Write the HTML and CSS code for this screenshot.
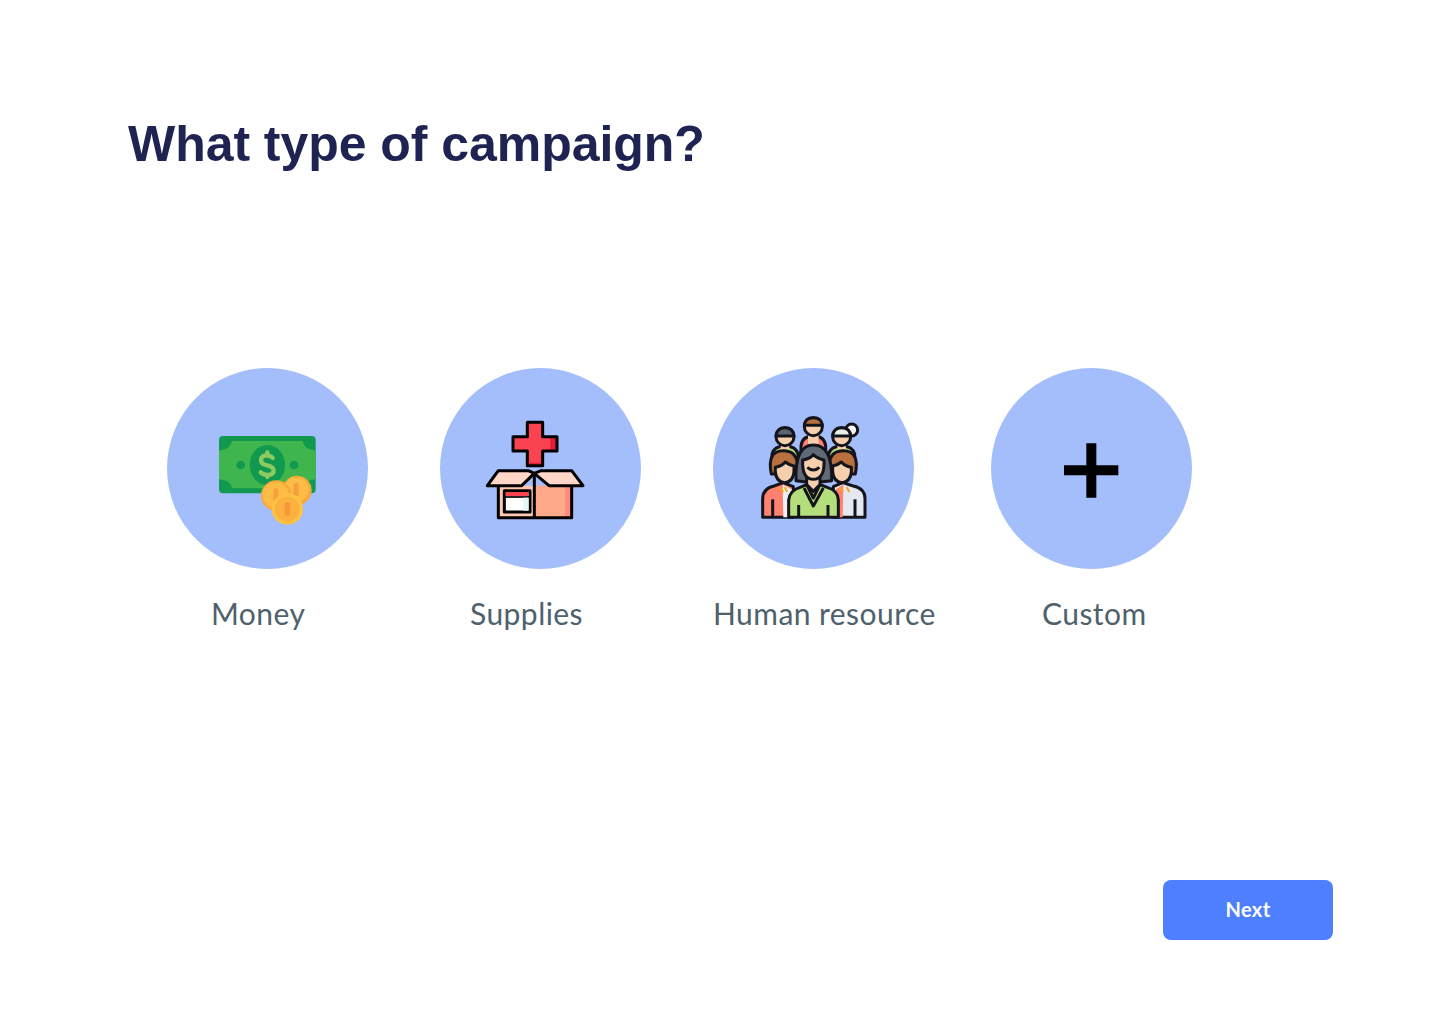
FILE: index.html
```html
<!DOCTYPE html>
<html lang="en">
<head>
    <meta charset="UTF-8">
    <meta name="viewport" content="width=device-width, initial-scale=1.0">
    <title>What type of campaign?</title>
    <link rel="stylesheet" href="styles.css">
</head>
<body>
    <main class="page">
        <h1 class="title">What type of campaign?</h1>
        <div class="options">
            <div class="option option-money">
                <div class="circle">
                    <svg class="icon" viewBox="-99 -156 603 603">
                        <rect x="57" y="48" width="290" height="172" rx="12" fill="#119a4f"/>
                        <path d="M96 63H308Q312 88 347 92V178Q312 180 308 205H96Q92 180 57 178V92Q92 88 96 63Z" fill="#3fb54e"/>
                        <ellipse cx="202" cy="135" rx="53" ry="60" fill="#119a4f"/>
                        <circle cx="122" cy="135" r="13" fill="#119a4f"/>
                        <circle cx="282" cy="135" r="13" fill="#119a4f"/>
                        <path d="M218 114Q212 106 200 106Q183 107 183 120Q183 132 201 136Q221 140 221 152Q220 165 202 165Q190 165 182 157M202 97V106M202 165V171" fill="none" stroke="#8dcb62" stroke-width="13" stroke-linecap="round"/>
                        <circle cx="291" cy="211" r="44" fill="#f7a93a"/>
                        <circle cx="289" cy="209" r="37" fill="#fcbc45"/>
                        <rect x="281" y="189" width="15" height="40" rx="7" fill="#f6a03b"/>
                        <circle cx="229" cy="227" r="46" fill="#f7a93a"/>
                        <circle cx="227" cy="225" r="39" fill="#fcbc45"/>
                        <rect x="220" y="205" width="15" height="40" rx="7" fill="#f6a03b"/>
                        <circle cx="262" cy="267" r="47" fill="#fec243"/>
                        <circle cx="262" cy="267" r="37" fill="#fbb040"/>
                        <rect x="254" y="246" width="16" height="42" rx="8" fill="#f6983a"/>
                    </svg>
                </div>
                <p class="label">Money</p>
            </div>
            <div class="option option-supplies">
                <div class="circle">
                    <svg class="icon" viewBox="-105 -126 603 603" stroke-linejoin="round">
                        <path d="M157 37H203V80H246V123H203V167H157V123H114V80H157Z" fill="#fa4350"/>
                        <path d="M226 80H246V123H226ZM157 158H203V167H157Z" fill="#e31b3c"/>
                        <path d="M157 37H203V80H246V123H203V167H157V123H114V80H157Z" fill="none" stroke="#000" stroke-width="9"/>
                        <rect x="70" y="227" width="108" height="96" fill="#ffc7b1"/>
                        <rect x="178" y="227" width="112" height="96" fill="#ffa98b"/>
                        <rect x="270" y="227" width="20" height="96" fill="#ff8b80"/>
                        <path d="M70 227V323H290V227M178 190V323" fill="none" stroke="#000" stroke-width="9"/>
                        <path d="M70 182H160L178 190L140 227H37Z" fill="#ffd6c8" stroke="#000" stroke-width="9"/>
                        <path d="M178 190L198 182H290L324 227H222Z" fill="#ffd6c8" stroke="#000" stroke-width="9"/>
                        <rect x="88" y="242" width="77" height="64" fill="#fff" stroke="#000" stroke-width="9"/>
                        <rect x="92" y="246" width="69" height="13" fill="#fa4350"/>
                        <path d="M88 261H165" stroke="#000" stroke-width="5"/>
                        <rect x="145" y="263" width="16" height="39" fill="#dff7f7"/>
                    </svg>
                </div>
                <p class="label">Supplies</p>
            </div>
            <div class="option option-human">
                <div class="circle">
                    <svg class="icon" viewBox="-111 -126 603 603" stroke="#14141c" stroke-width="9" stroke-linejoin="round">
                        <!-- back row -->
                        <path d="M66 132Q72 108 105 108Q138 108 144 132V150H66Z" fill="#b3dd7a"/>
                        <path d="M92 100H118V118H92Z" fill="#f6cfae" stroke-width="0"/>
                        <path d="M236 132Q242 108 275 108Q308 108 314 132V150H236Z" fill="#b3dd7a"/>
                        <path d="M262 100H288V118H262Z" fill="#f6cfae" stroke-width="0"/>
                        <path d="M153 108Q156 78 190 78Q224 78 227 108V130H153Z" fill="#ff8270"/>
                        <path d="M174 70H206V102H174Z" fill="#f6cfae" stroke-width="0"/>
                        <circle cx="305" cy="60" r="18" fill="#f8f8f4"/>
                        <circle cx="105" cy="80" r="27" fill="#f6cfae"/>
                        <path d="M78 78Q80 53 105 53Q130 53 132 78Z" fill="#5b6571"/>
                        <circle cx="190" cy="50" r="27" fill="#f6cfae"/>
                        <path d="M163 46Q165 23 190 23Q215 23 217 46Z" fill="#b9703f"/>
                        <circle cx="275" cy="80" r="27" fill="#f6cfae"/>
                        <path d="M248 78Q250 53 275 53Q300 53 302 78Z" fill="#eceee8"/>
                        <!-- left person -->
                        <path d="M38 322V266Q38 236 72 228L100 218L130 230V322Z" fill="#ff8270"/>
                        <path d="M98 224L125 238V322H100Z" fill="#eef0f2" stroke-width="0"/>
                        <path d="M68 268V322" fill="none"/>
                        <path d="M64 192Q50 122 100 122Q138 122 142 160L134 192H74Z" fill="#b9703f"/>
                        <path d="M76 172Q96 168 106 156Q118 166 132 168V185Q130 216 104 218Q78 216 76 185Z" fill="#f6cfae"/>
                        <!-- right person -->
                        <path d="M345 322V266Q345 236 310 228L278 218L250 230V322Z" fill="#e4e8ef"/>
                        <path d="M280 224L258 238V322H278Z" fill="#ff8270" stroke-width="0"/>
                        <path d="M315 268V322" fill="none"/>
                        <path d="M316 192Q330 122 280 122Q242 122 238 160L246 192H306Z" fill="#b9703f"/>
                        <path d="M304 172Q284 168 274 156Q262 166 248 168V185Q250 216 276 218Q302 216 304 185Z" fill="#f6cfae"/>
                        <path d="M88 232L100 246M104 232L112 246" fill="none" stroke="#f6a51c" stroke-width="6"/>
                        <path d="M268 232L280 246M290 232L298 246" fill="none" stroke="#f6a51c" stroke-width="6"/>
                        <!-- front person -->
                        <path d="M138 212Q134 105 190 105Q248 105 245 212L218 215H162Z" fill="#5f6a76"/>
                        <path d="M116 322V270Q118 242 150 232L170 224H210L232 232Q265 242 265 270V322Z" fill="#b4dd7c"/>
                        <path d="M170 224L190 264L210 224Z" fill="#f8d868"/>
                        <path d="M170 224V200H210V224L190 244Z" fill="#f6cfae"/>
                        <path d="M158 150Q180 146 190 134Q202 146 222 150V165Q220 207 190 208Q160 207 158 165Z" fill="#f6cfae"/>
                        <path d="M172 172Q190 188 208 172M146 285V322M234 285V322M162 234L190 288L220 234" fill="none"/>
                    </svg>
                </div>
                <p class="label">Human resource</p>
            </div>
            <div class="option option-custom">
                <div class="circle">
                    <svg class="icon" viewBox="-147 -156 603 603">
                        <path d="M139 70H169V136H235V166H169V233H139V166H72V136H139Z" fill="#000"/>
                    </svg>
                </div>
                <p class="label">Custom</p>
            </div>
        </div>
        <div class="actions">
            <button class="next-btn" type="button">Next</button>
        </div>
    </main>
</body>
</html>
```

FILE: styles.css
```css
* {
    box-sizing: border-box;
}
body {
    margin: 0;
    background: #fff;
    font-family: 'Lato', sans-serif;
}
.page {
    display: flex;
    flex-direction: column;
    height: 1024px;
    padding: 112px 107px 84px 128px;
}
.title {
    margin: 0;
    font-family: 'Liberation Sans', Arial, sans-serif;
    font-size: 50px;
    line-height: 64px;
    font-weight: 700;
    letter-spacing: -0.05px;
    color: #1f2352;
}
.options {
    display: flex;
    margin-top: 192px;
    margin-left: 39px;
}
.option {
    width: 201px;
    margin-right: 72px;
}
.option-human {
    margin-right: 77px;
}
.circle {
    width: 201px;
    height: 201px;
    border-radius: 50%;
    background: #a4bdfb;
}
.icon {
    display: block;
    width: 201px;
    height: 201px;
}
.label {
    margin: 25px 0 0;
    font-size: 30px;
    line-height: 38px;
    letter-spacing: 0.45px;
    color: #4e616d;
    white-space: nowrap;
}
.option-money .label {
    padding-left: 44px;
}
.option-supplies .label {
    padding-left: 30px;
}
.option-human .label {
    padding-left: 0;
}
.option-custom .label {
    padding-left: 51px;
}
.actions {
    display: flex;
    justify-content: flex-end;
    margin-top: auto;
}
.next-btn {
    width: 170px;
    height: 60px;
    padding: 0 0 2px;
    border: none;
    border-radius: 8px;
    background: #4d7fff;
    color: #fff;
    font-family: 'Lato', sans-serif;
    font-size: 20px;
    font-weight: 700;
    letter-spacing: 0.4px;
}
```
